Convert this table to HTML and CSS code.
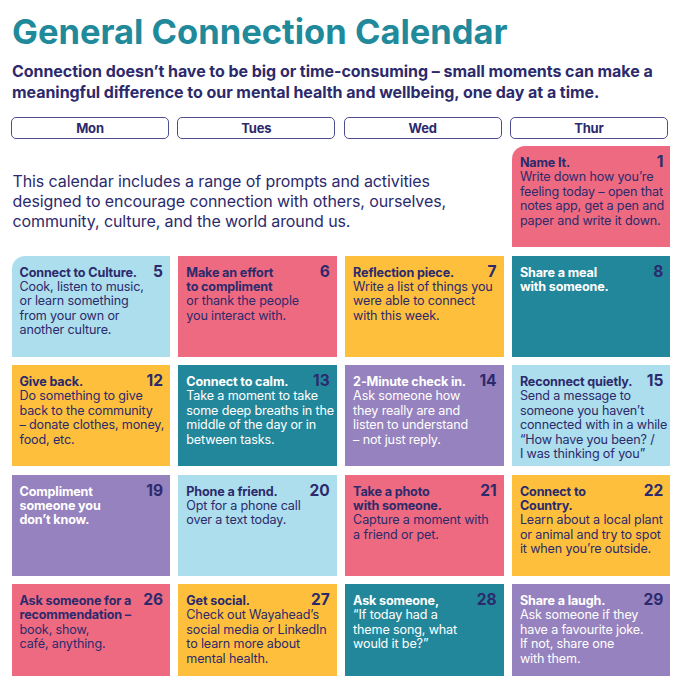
FILE: index.html
```html
<!DOCTYPE html>
<html lang="en">
<head>
<meta charset="utf-8">
<title>General Connection Calendar</title>
<link rel="stylesheet" href="styles.css">
</head>
<body>
<div class="page">
  <header class="head">
    <h1 class="title">General Connection Calendar</h1>
    <p class="lead">Connection doesn’t have to be big or time-consuming – small moments can make a<br>meaningful difference to our mental health and wellbeing, one day at a time.</p>
  </header>

  <div class="days">
    <div class="day">Mon</div>
    <div class="day">Tues</div>
    <div class="day">Wed</div>
    <div class="day">Thur</div>
    <div class="day"></div>
  </div>

  <div class="grid">
    <p class="intro">This calendar includes a range of prompts and activities<br>designed to encourage connection with others, ourselves,<br>community, culture, and the world around us.</p>
    <div class="card pink round"><span class="num">1</span><p class="t">Name It.</p><p class="b">Write down how you’re<br>feeling today – open that<br>notes app, get a pen and<br>paper and write it down.</p></div>
    <div class="card blank"></div>

    <div class="card blue round"><span class="num">5</span><p class="t">Connect to Culture.</p><p class="b">Cook, listen to music,<br>or learn something<br>from your own or<br>another culture.</p></div>
    <div class="card pink"><span class="num">6</span><p class="t">Make an effort<br>to compliment</p><p class="b">or thank the people<br>you interact with.</p></div>
    <div class="card yellow"><span class="num">7</span><p class="t">Reflection piece.</p><p class="b">Write a list of things you<br>were able to connect<br>with this week.</p></div>
    <div class="card teal"><span class="num">8</span><p class="t">Share a meal<br>with someone.</p></div>
    <div class="card blank"></div>

    <div class="card yellow"><span class="num">12</span><p class="t">Give back.</p><p class="b">Do something to give<br>back to the community<br>– donate clothes, money,<br>food, etc.</p></div>
    <div class="card teal"><span class="num">13</span><p class="t">Connect to calm.</p><p class="b">Take a moment to take<br>some deep breaths in the<br>middle of the day or in<br>between tasks.</p></div>
    <div class="card purple"><span class="num">14</span><p class="t">2-Minute check in.</p><p class="b">Ask someone how<br>they really are and<br>listen to understand<br>– not just reply.</p></div>
    <div class="card blue"><span class="num">15</span><p class="t">Reconnect quietly.</p><p class="b">Send a message to<br>someone you haven’t<br>connected with in a while<br>“How have you been? /<br>I was thinking of you”</p></div>
    <div class="card blank"></div>

    <div class="card purple"><span class="num">19</span><p class="t">Compliment<br>someone you<br>don’t know.</p></div>
    <div class="card blue"><span class="num">20</span><p class="t">Phone a friend.</p><p class="b">Opt for a phone call<br>over a text today.</p></div>
    <div class="card pink"><span class="num">21</span><p class="t">Take a photo<br>with someone.</p><p class="b">Capture a moment with<br>a friend or pet.</p></div>
    <div class="card yellow"><span class="num">22</span><p class="t">Connect to<br>Country.</p><p class="b">Learn about a local plant<br>or animal and try to spot<br>it when you’re outside.</p></div>
    <div class="card blank"></div>

    <div class="card pink"><span class="num">26</span><p class="t">Ask someone for a<br>recommendation –</p><p class="b">book, show,<br>café, anything.</p></div>
    <div class="card yellow"><span class="num">27</span><p class="t">Get social.</p><p class="b">Check out Wayahead’s<br>social media or LinkedIn<br>to learn more about<br>mental health.</p></div>
    <div class="card teal"><span class="num">28</span><p class="t">Ask someone,</p><p class="b">“If today had a<br>theme song, what<br>would it be?”</p></div>
    <div class="card purple"><span class="num">29</span><p class="t">Share a laugh.</p><p class="b">Ask someone if they<br>have a favourite joke.<br>If not, share one<br>with them.</p></div>
    <div class="card blank"></div>
  </div>
</div>
</body>
</html>
```
FILE: styles.css
```css
* { box-sizing: border-box; }
html, body { margin: 0; padding: 0; background: #ffffff; }
body {
  width: 676px;
  height: 676px;
  overflow: hidden;
  font-family: "Inter", "Liberation Sans", sans-serif;
  color: #2c2a6c;
}
.page { width: 676px; overflow: hidden; }

.head { padding: 13px 0 0 12px; }
.title {
  margin: 0;
  font-size: 34.5px;
  line-height: 38px;
  font-weight: 700;
  color: #20899a;
  letter-spacing: 0;
}
.lead {
  margin: 10px 0 0;
  font-size: 16px;
  line-height: 21px;
  font-weight: 700;
  color: #2c2a6c;
  letter-spacing: -0.05px;
  white-space: nowrap;
}

.days {
  display: grid;
  grid-template-columns: repeat(5, 158px);
  column-gap: 8.3px;
  margin: 14px 0 0 11px;
  width: 700px;
}
.day {
  height: 22px;
  border: 1.5px solid #4f4d8d;
  border-radius: 5px;
  font-size: 13px;
  font-weight: 700;
  line-height: 20px;
  text-align: center;
  color: #2c2a6c;
  letter-spacing: -0.2px;
}

.grid {
  display: grid;
  grid-template-columns: repeat(5, 158.5px);
  grid-auto-rows: 101px;
  column-gap: 8.3px;
  row-gap: 8.5px;
  margin: 7px 0 0 11.5px;
  width: 720px;
}
.intro {
  grid-column: 1 / span 3;
  margin: 0;
  padding: 25px 0 0 1px;
  font-size: 16px;
  line-height: 20px;
  font-weight: 400;
  color: #2c2a6c;
  letter-spacing: -0.1px;
  white-space: nowrap;
}

.card {
  position: relative;
  padding: 10px 8px 0 8px;
  font-size: 12.6px;
  line-height: 14.4px;
  letter-spacing: -0.15px;
  white-space: nowrap;
}
.card.round { border-top-left-radius: 13px; }
.card.blank { visibility: hidden; }
.card p { margin: 0; }
.t { font-weight: 700; }
.b { font-weight: 400; }
.num {
  position: absolute;
  top: 7px;
  right: 7px;
  font-size: 15.5px;
  line-height: 18px;
  font-weight: 700;
  color: #2c2a6c;
  letter-spacing: 0;
}

.blue   { background: #acdeed; color: #2c2a6c; }
.pink   { background: #ee6a80; color: #2c2a6c; }
.yellow { background: #fec03c; color: #2c2a6c; }
.teal   { background: #23879b; color: #ffffff; }
.purple { background: #9682be; color: #ffffff; }
```
